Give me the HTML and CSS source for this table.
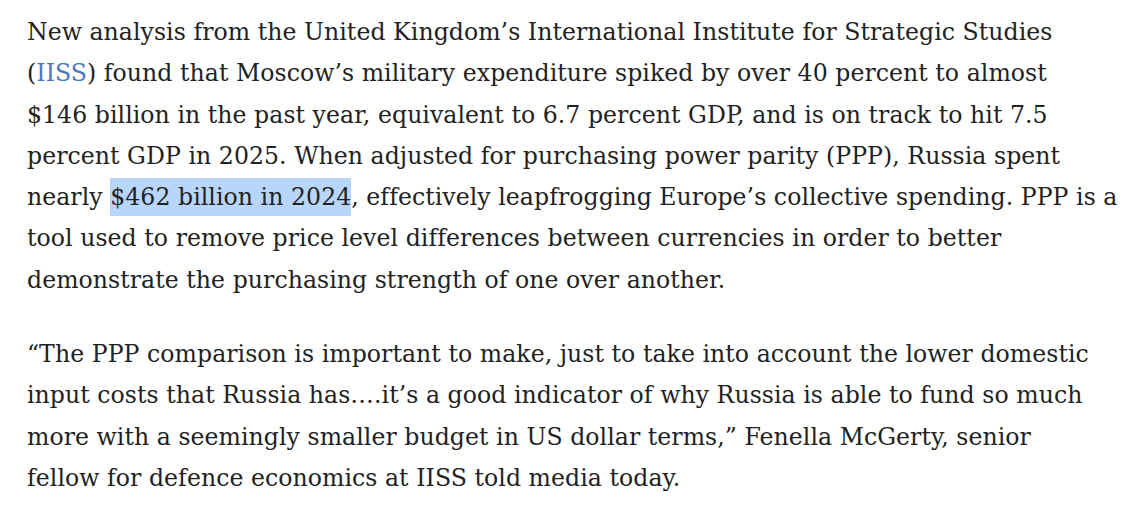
FILE: index.html
```html
<!DOCTYPE html>
<html lang="en">
<head>
<meta charset="utf-8">
<link rel="stylesheet" href="styles.css">
</head>
<body>
<article class="article">
<p class="para">New analysis from the United Kingdom’s International Institute for Strategic Studies<br>(<a class="link" href="#">IISS</a>) found that Moscow’s military expenditure spiked by over 40 percent to almost<br>$146 billion in the past year, equivalent to 6.7 percent GDP, and is on track to hit 7.5<br>percent GDP in 2025. When adjusted for purchasing power parity (PPP), Russia spent<br>nearly <span class="mark">$462 billion in 2024</span>, effectively leapfrogging Europe’s collective spending. PPP is a<br>tool used to remove price level differences between currencies in order to better<br>demonstrate the purchasing strength of one over another.</p>
<p class="para">“The PPP comparison is important to make, just to take into account the lower domestic<br>input costs that Russia has….it’s a good indicator of why Russia is able to fund so much<br>more with a seemingly smaller budget in US dollar terms,” Fenella McGerty, senior<br>fellow for defence economics at IISS told media today.</p>
</article>
</body>
</html>
```
FILE: styles.css
```css
html, body {
  margin: 0;
  padding: 0;
  background: #ffffff;
}
.article {
  padding: 12px 0 0 27px;
}
.para {
  margin: 0 0 33px 0;
  font-family: "DejaVu Serif", serif;
  font-size: 23.6px;
  letter-spacing: 0.05px;
  line-height: 41.3px;
  color: #222222;
  white-space: nowrap;
}
.link {
  color: #4a78c2;
  text-decoration: none;
}
.mark {
  background: #b8d6fb;
  padding: 5px 0;
}
```
